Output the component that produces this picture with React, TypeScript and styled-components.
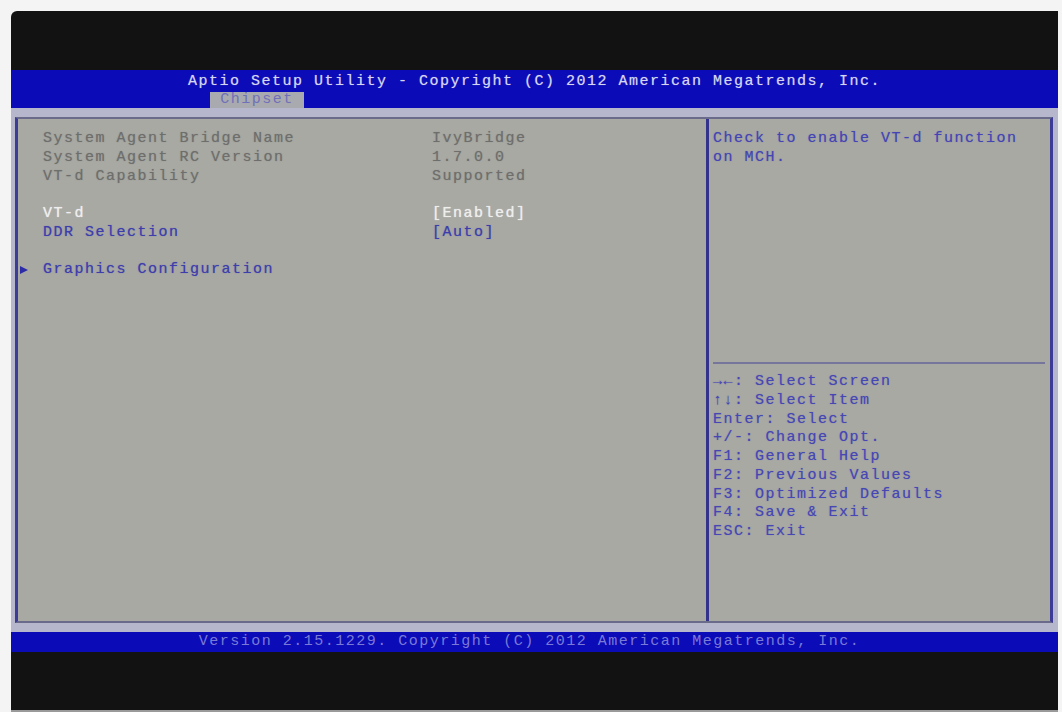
import styled, { createGlobalStyle } from "styled-components";

const GlobalStyle = createGlobalStyle`
  html, body {
    margin: 0;
    padding: 0;
    background: #f4f4f4;
  }
  #root {
    width: 1062px;
    height: 712px;
    overflow: hidden;
  }
`;

const Screen = styled.div`
  margin: 11px 4px 0 11px;
  width: 1047px;
  height: 699px;
  background: #121212;
  display: flex;
  flex-direction: column;
  font-family: "Liberation Mono", "DejaVu Sans Mono", monospace;
  font-size: 15px;
  letter-spacing: 1.5px;
  border-bottom: 2px solid #9a9a9a;
  border-top-left-radius: 6px;
`;

const BlackBand = styled.div<{ $height: number }>`
  height: ${(p) => p.$height}px;
  flex-shrink: 0;
`;

const Header = styled.div`
  height: 38px;
  background: #0b0bb8;
  padding-top: 3px;
  box-sizing: border-box;
  display: flex;
  flex-direction: column;
`;

const Title = styled.div`
  height: 18px;
  line-height: 18px;
  text-align: center;
  color: #d6d6f2;
  text-shadow: 0 0 1px rgba(220, 220, 244, 0.5);
`;

const Tab = styled.div`
  margin-top: 1px;
  margin-left: 199px;
  width: 94px;
  height: 16px;
  line-height: 16px;
  background: #a9aab0;
  color: #7070b8;
  text-align: center;
`;

const Body = styled.div`
  height: 524px;
  background: #b6b6cc;
  padding: 9px 5px 9px 4px;
  box-sizing: border-box;
`;

const Frame = styled.div`
  height: 100%;
  box-sizing: border-box;
  border: 2px solid #3c3c96;
  border-left-width: 3px;
  border-right-width: 3px;
  border-top-color: #6a6a8a;
  border-bottom-color: #6a6a8a;
  background: #a8a9a3;
  display: grid;
  grid-template-columns: 688px 1fr;
`;

const LeftPanel = styled.div`
  padding: 11px 0 0 25px;
`;

const Row = styled.div`
  display: grid;
  grid-template-columns: 389px 1fr;
  height: 18.75px;
  line-height: 18.75px;
  position: relative;
`;

const Spacer = styled.div`
  height: 18.75px;
`;

const Cell = styled.span<{ $tone: "info" | "active" | "link" }>`
  white-space: pre;
  color: ${(p) =>
    p.$tone === "active" ? "#eeeeee" : p.$tone === "link" ? "#3d3dac" : "#6e6e6c"};
  text-shadow: 0 0 1px
    ${(p) =>
      p.$tone === "active"
        ? "rgba(255,255,255,0.7)"
        : p.$tone === "link"
        ? "rgba(61,61,172,0.6)"
        : "rgba(100,100,100,0.5)"};
`;

const Pointer = styled.span`
  position: absolute;
  left: -23px;
  top: 5px;
  width: 0;
  height: 0;
  border-top: 4.5px solid transparent;
  border-bottom: 4.5px solid transparent;
  border-left: 8px solid #2c2ca8;
`;

const RightPanel = styled.div`
  border-left: 3px solid #33338c;
  display: flex;
  flex-direction: column;
`;

const HelpText = styled.div`
  height: 243px;
  padding: 11px 0 0 4px;
  box-sizing: border-box;
  line-height: 18.75px;
  color: #4444b4;
  text-shadow: 0 0 1px rgba(68, 68, 180, 0.5);
`;

const Separator = styled.div`
  height: 2px;
  margin: 0 5px 0 4px;
  background: #76769c;
`;

const KeyList = styled.div`
  padding: 9px 0 0 4px;
  line-height: 18.75px;
  color: #4646b4;
  text-shadow: 0 0 1px rgba(70, 70, 180, 0.5);
`;

const KeyLine = styled.div`
  white-space: pre;
`;

const Footer = styled.div`
  height: 20px;
  line-height: 20px;
  background: #0b0bb8;
  color: #7a7ad6;
  text-align: center;
  padding-right: 10px;
`;

type Item = { label: string; value?: string; tone: "info" | "active" | "link"; sub?: boolean } | null;

const items: Item[] = [
  { label: "System Agent Bridge Name", value: "IvyBridge", tone: "info" },
  { label: "System Agent RC Version", value: "1.7.0.0", tone: "info" },
  { label: "VT-d Capability", value: "Supported", tone: "info" },
  null,
  { label: "VT-d", value: "[Enabled]", tone: "active" },
  { label: "DDR Selection", value: "[Auto]", tone: "link" },
  null,
  { label: "Graphics Configuration", tone: "link", sub: true },
];

const keys = [
  "→←: Select Screen",
  "↑↓: Select Item",
  "Enter: Select",
  "+/-: Change Opt.",
  "F1: General Help",
  "F2: Previous Values",
  "F3: Optimized Defaults",
  "F4: Save & Exit",
  "ESC: Exit",
];

export default function App() {
  return (
    <>
      <GlobalStyle />
      <Screen>
        <BlackBand $height={59} />
        <Header>
          <Title>Aptio Setup Utility - Copyright (C) 2012 American Megatrends, Inc.</Title>
          <Tab>Chipset</Tab>
        </Header>
        <Body>
          <Frame>
            <LeftPanel>
              {items.map((item, idx) =>
                item ? (
                  <Row key={idx}>
                    {item.sub && <Pointer />}
                    <Cell $tone={item.tone}>{item.label}</Cell>
                    {item.value && <Cell $tone={item.tone}>{item.value}</Cell>}
                  </Row>
                ) : (
                  <Spacer key={idx} />
                )
              )}
            </LeftPanel>
            <RightPanel>
              <HelpText>
                Check to enable VT-d function
                <br />
                on MCH.
              </HelpText>
              <Separator />
              <KeyList>
                {keys.map((k) => (
                  <KeyLine key={k}>{k}</KeyLine>
                ))}
              </KeyList>
            </RightPanel>
          </Frame>
        </Body>
        <Footer>Version 2.15.1229. Copyright (C) 2012 American Megatrends, Inc.</Footer>
        <BlackBand $height={56} />
      </Screen>
    </>
  );
}
